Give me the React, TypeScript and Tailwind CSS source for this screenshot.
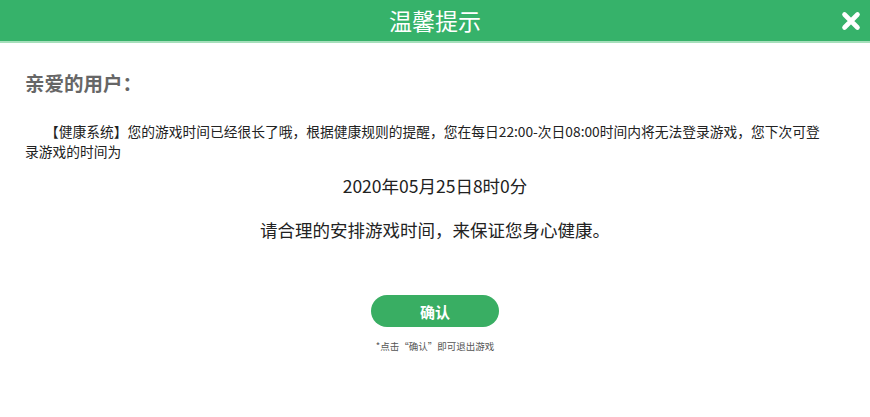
import React from "react";

export default function App() {
  const cjk = { fontFamily: '"Noto Sans CJK SC", "Noto Sans", sans-serif' };
  return (
    <div className="w-[870px] h-[417px] bg-white overflow-hidden" style={cjk}>
      <div className="relative h-[43px] bg-[#36b26a] border-b-2 border-[#a6dfbb] flex items-center justify-center">
        <span className="text-white text-[23px] leading-none">温馨提示</span>
        <svg className="absolute right-[9px] top-[11px]" width="20" height="20" viewBox="0 0 20 20">
          <path d="M3.5 3.5 L16.5 16.5 M16.5 3.5 L3.5 16.5" stroke="white" strokeWidth="4.6" strokeLinecap="round" />
        </svg>
      </div>
      <div className="px-[25px] pt-[27px]">
        <div className="text-[19.5px] font-bold text-[#666] leading-[26px]">亲爱的用户：</div>
        <p className="mt-[25px] text-[13.75px] leading-[20px] text-[#222] indent-[20px] pr-[20px]">
          【健康系统】您的游戏时间已经很长了哦，根据健康规则的提醒，您在每日22:00-次日08:00时间内将无法登录游戏，您下次可登录游戏的时间为
        </p>
        <div className="mt-[13px] text-center text-[17.5px] leading-[24px] text-[#222]">2020年05月25日8时0分</div>
        <div className="mt-[20px] text-center text-[17.5px] leading-[24px] text-[#222]">请合理的安排游戏时间，来保证您身心健康。</div>
        <div className="mt-[53px] flex justify-center">
          <button className="w-[128px] h-[32px] rounded-full bg-[#39ae63] text-white text-[15px] font-bold leading-none">确认</button>
        </div>
        <div className="mt-[12px] text-center text-[9.5px] leading-[14px] text-[#555]">*点击“确认”即可退出游戏</div>
      </div>
    </div>
  );
}
